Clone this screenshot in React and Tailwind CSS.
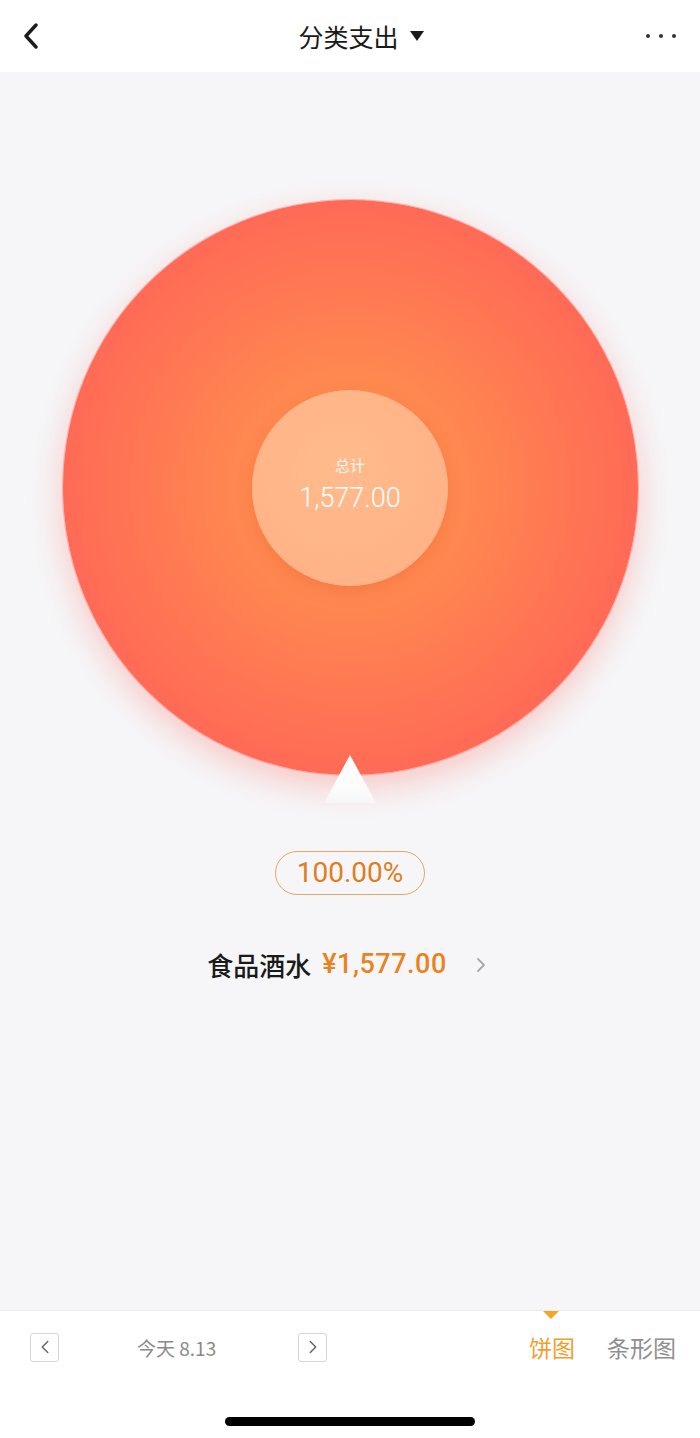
import { ChevronLeft, ChevronRight } from "lucide-react";

const cjk = "font-['Noto_Sans_CJK_SC','Noto_Sans',sans-serif]";
const num = "font-['Roboto','Noto_Sans_CJK_SC',sans-serif]";

const App = () => {
  return (
    <div className={`flex flex-col w-[700px] h-[1438px] bg-[#f6f6f8] ${cjk}`}>
      {/* Header */}
      <header className="h-[72px] bg-white flex items-center justify-between px-[20px] shrink-0">
        <svg width="20" height="26" viewBox="0 0 20 26" fill="none" className="ml-[2px]">
          <path d="M14 2 L4 13 L14 24" stroke="#1c1c1c" strokeWidth="3.4" strokeLinecap="round" strokeLinejoin="round" />
        </svg>
        <div className="flex items-center gap-[11px] ml-[34px]">
          <span className="text-[25px] font-normal text-[#1a1a1a] leading-none">分类支出</span>
          <svg width="14" height="10" viewBox="0 0 14 10">
            <path d="M0 0 L14 0 L7 10 Z" fill="#1a1a1a" />
          </svg>
        </div>
        <div className="flex items-center gap-[9px] mr-[4px]">
          <span className="w-[4px] h-[4px] rounded-full bg-[#333]" />
          <span className="w-[4px] h-[4px] rounded-full bg-[#333]" />
          <span className="w-[4px] h-[4px] rounded-full bg-[#333]" />
        </div>
      </header>

      {/* Chart area */}
      <main className="flex-1 flex flex-col items-center pt-[128px]">
        <div className="w-[575px] h-[575px] rounded-full flex items-center justify-center bg-[radial-gradient(circle,#ff9a52_0%,#ff8650_30%,#ff6e55_65%,#fe5d5a_90%,#fd6862_100%)] shadow-[0_12px_34px_rgba(255,95,85,0.32)] ring-1 ring-[#ff8a84]/60">
          <div className="w-[196px] h-[196px] rounded-full bg-[radial-gradient(circle_at_45%_40%,#ffbb8d_0%,#ffb386_70%,#ffad80_100%)] shadow-[0_6px_16px_rgba(220,80,40,0.25)] flex flex-col items-center justify-center">
            <span className="text-[15px] text-white/90 leading-none -mt-[6px]">总计</span>
            <span className={`${num} text-[27px] font-light text-white leading-none mt-[13px]`}>1,577.00</span>
          </div>
        </div>

        {/* Pointer */}
        <svg width="80" height="52" viewBox="0 0 80 52" className="-mt-[22px] relative">
          <defs>
            <linearGradient id="pt" x1="0" y1="0" x2="0" y2="1">
              <stop offset="0" stopColor="#ffffff" />
              <stop offset="0.7" stopColor="#fbfbfc" />
              <stop offset="1" stopColor="#f6f6f8" />
            </linearGradient>
          </defs>
          <path d="M40 2 L66 50 L14 50 Z" fill="url(#pt)" />
        </svg>

        <div className="mt-[46px] w-[150px] h-[44px] rounded-full border border-[#e6a66a] flex items-center justify-center">
          <span className={`${num} text-[28px] text-[#e07d1e] leading-none`}>100.00%</span>
        </div>

        <div className="mt-[56px] flex items-center whitespace-nowrap">
          <span className="text-[26px] font-medium text-[#1a1a1a] leading-none">食品酒水</span>
          <span className={`${num} text-[27px] font-medium tracking-[0.5px] text-[#e8841f] leading-none ml-[11px]`}>¥1,577.00</span>
          <ChevronRight className="ml-[22px] text-[#a8a8a8]" size={24} strokeWidth={1.8} />
        </div>
      </main>

      {/* Bottom bar */}
      <footer className="h-[128px] bg-white shrink-0 border-t border-[#ececec] relative">
        <svg width="16" height="8" viewBox="0 0 16 8" className="absolute left-[543px] top-0">
          <path d="M0 0 L16 0 L8 8 Z" fill="#f5a623" />
        </svg>
        <div className="flex items-center h-[72px] px-[30px] whitespace-nowrap">
          <button className="shrink-0 w-[29px] h-[29px] border border-[#d6d6d6] rounded-[3px] flex items-center justify-center">
            <ChevronLeft size={22} strokeWidth={1.6} className="text-[#666]" />
          </button>
          <span className="shrink-0 ml-[78px] w-[84px] text-[19px] text-[#8a8a8a] leading-none">今天 8.13</span>
          <button className="shrink-0 ml-[77px] w-[29px] h-[29px] border border-[#d6d6d6] rounded-[3px] flex items-center justify-center">
            <ChevronRight size={22} strokeWidth={1.6} className="text-[#666]" />
          </button>
          <span className="shrink-0 ml-[202px] text-[23px] text-[#f0a030] leading-none">饼图</span>
          <span className="shrink-0 ml-[32px] text-[23px] text-[#8f8f8f] leading-none">条形图</span>
        </div>
        <div className="flex justify-center mt-[34px]">
          <div className="w-[250px] h-[9px] rounded-full bg-black" />
        </div>
      </footer>
    </div>
  );
};

export default App;
